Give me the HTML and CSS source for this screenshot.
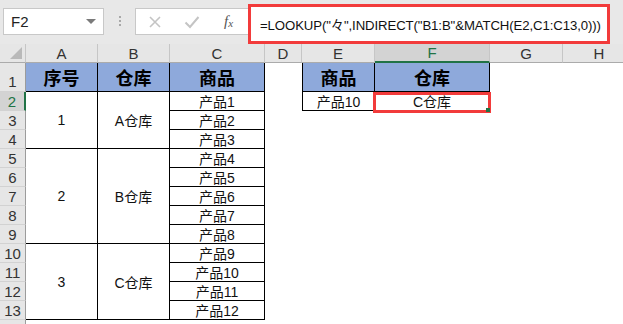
FILE: index.html
```html
<!DOCTYPE html>
<html>
<head>
<meta charset="utf-8">
<link rel="stylesheet" href="styles.css">
</head>
<body>
<div class="app">
  <div class="toolbar">
    <div class="namebox"><span class="name">F2</span><span class="caret"></span></div>
    <div class="sep"><i></i><i></i><i></i></div>
    <div class="btnbox">
      <svg class="ico" width="14" height="14" viewBox="0 0 14 14"><path d="M2 2L12 12M12 2L2 12" stroke="#c4c4c4" stroke-width="1.6" fill="none"/></svg>
      <svg class="ico" width="16" height="14" viewBox="0 0 16 14"><path d="M1.5 7.5L6 12L14.5 2" stroke="#c4c4c4" stroke-width="2" fill="none"/></svg>
      <span class="fx">f<sub>x</sub></span>
    </div>
    <div class="formula">=LOOKUP("々",INDIRECT("B1:B"&amp;MATCH(E2,C1:C13,0)))</div>
  </div>
  <div class="sheet">
    <div class="corner"></div>
    <div class="ch">A</div><div class="ch">B</div><div class="ch">C</div><div class="ch">D</div><div class="ch">E</div><div class="ch sel">F</div><div class="ch">G</div><div class="ch">H</div>

    <div class="rh tall">1</div>
    <div class="c hd">序号</div><div class="c hd">仓库</div><div class="c hd">商品</div><div class="c"></div><div class="c hd bl">商品</div><div class="c hd">仓库</div><div class="c"></div><div class="c"></div>

    <div class="rh sel">2</div>
    <div class="c b m3">1</div><div class="c b m3">A仓库</div><div class="c b">产品1</div><div class="c"></div><div class="c b bl">产品10</div><div class="c b act">C仓库<span class="mark"></span><span class="handle"></span></div><div class="c"></div><div class="c"></div>

    <div class="rh">3</div>
    <div class="c b">产品2</div><div class="c"></div><div class="c"></div><div class="c"></div><div class="c"></div><div class="c"></div>

    <div class="rh">4</div>
    <div class="c b">产品3</div><div class="c"></div><div class="c"></div><div class="c"></div><div class="c"></div><div class="c"></div>

    <div class="rh">5</div>
    <div class="c b m5">2</div><div class="c b m5">B仓库</div><div class="c b">产品4</div><div class="c"></div><div class="c"></div><div class="c"></div><div class="c"></div><div class="c"></div>

    <div class="rh">6</div>
    <div class="c b">产品5</div><div class="c"></div><div class="c"></div><div class="c"></div><div class="c"></div><div class="c"></div>

    <div class="rh">7</div>
    <div class="c b">产品6</div><div class="c"></div><div class="c"></div><div class="c"></div><div class="c"></div><div class="c"></div>

    <div class="rh">8</div>
    <div class="c b">产品7</div><div class="c"></div><div class="c"></div><div class="c"></div><div class="c"></div><div class="c"></div>

    <div class="rh">9</div>
    <div class="c b">产品8</div><div class="c"></div><div class="c"></div><div class="c"></div><div class="c"></div><div class="c"></div>

    <div class="rh">10</div>
    <div class="c b m4">3</div><div class="c b m4">C仓库</div><div class="c b">产品9</div><div class="c"></div><div class="c"></div><div class="c"></div><div class="c"></div><div class="c"></div>

    <div class="rh">11</div>
    <div class="c b">产品10</div><div class="c"></div><div class="c"></div><div class="c"></div><div class="c"></div><div class="c"></div>

    <div class="rh">12</div>
    <div class="c b">产品11</div><div class="c"></div><div class="c"></div><div class="c"></div><div class="c"></div><div class="c"></div>

    <div class="rh">13</div>
    <div class="c b">产品12</div><div class="c"></div><div class="c"></div><div class="c"></div><div class="c"></div><div class="c"></div>

    <div class="rh"></div>
  </div>
</div>
</body>
</html>
```
FILE: styles.css
```css
* { box-sizing: border-box; }
html, body { margin: 0; padding: 0; }
body {
  width: 623px;
  height: 324px;
  overflow: hidden;
  background: #fff;
  font-family: "Liberation Sans", "Noto Sans CJK SC", sans-serif;
}
.app { width: 623px; height: 324px; overflow: hidden; }

.toolbar {
  height: 44px;
  background: #e8e8e8;
  display: flex;
  align-items: flex-start;
  padding-left: 3px;
}
.namebox {
  margin-top: 8px;
  width: 101px;
  height: 27px;
  background: #fff;
  border: 1px solid #c8c8c8;
  display: flex;
  align-items: center;
  justify-content: space-between;
  padding: 0 7px 0 7px;
}
.name { font-size: 15px; color: #222; }
.caret {
  width: 0; height: 0;
  border-left: 5px solid transparent;
  border-right: 5px solid transparent;
  border-top: 5px solid #7a7a7a;
}
.sep {
  width: 31px;
  margin-top: 16px;
  display: flex;
  flex-direction: column;
  align-items: center;
  gap: 2px;
}
.sep i { display: block; width: 2px; height: 2px; background: #a8a8a8; }
.btnbox {
  margin-top: 8px;
  width: 113px;
  height: 27px;
  background: #fff;
  border: 1px solid #c8c8c8;
  border-right: none;
  display: flex;
  align-items: center;
  padding-left: 12px;
  gap: 22px;
}
.fx {
  font-family: "Liberation Serif", serif;
  font-style: italic;
  font-size: 15px;
  color: #555;
  margin-left: 2px;
}
.fx sub { font-size: 11px; vertical-align: -1px; }
.formula {
  margin-top: 4px;
  width: 362px;
  height: 40px;
  background: #fff;
  border: 3px solid #f23b3b;
  font-size: 13.2px;
  color: #111;
  display: flex;
  align-items: center;
  padding-left: 9px;
  white-space: nowrap;
  letter-spacing: -0.1px;
}

.sheet {
  display: grid;
  grid-template-columns: 26px 72px 72px 95px 37px 73px 115px 73px 73px;
  grid-template-rows: 19px 29px repeat(13, 19px);
}
.corner {
  background: #e6e6e6;
  border-right: 1px solid #c6c6c6;
  border-bottom: 1px solid #ababab;
  position: relative;
}
.corner::after {
  content: "";
  position: absolute;
  right: 3px;
  bottom: 3px;
  width: 0; height: 0;
  border-left: 12px solid transparent;
  border-bottom: 12px solid #b9b9b9;
}
.ch {
  background: #e6e6e6;
  border-right: 1px solid #c6c6c6;
  border-bottom: 1px solid #ababab;
  font-size: 15px;
  color: #333;
  display: flex;
  align-items: center;
  justify-content: center;
}
.ch.sel {
  background: #d3d3d3;
  color: #217346;
  border-bottom: 2px solid #217346;
}
.rh {
  background: #e6e6e6;
  border-right: 1px solid #9c9c9c;
  border-bottom: 1px solid #d2d2d2;
  font-size: 15px;
  color: #333;
  display: flex;
  align-items: flex-end;
  justify-content: center;
}
.rh.tall { padding-bottom: 1px; }
.rh.sel {
  background: #d3d3d3;
  color: #217346;
  border-right: 2px solid #217346;
}
.c {
  background: #fff;
  display: flex;
  align-items: center;
  justify-content: center;
  font-size: 14px;
  color: #111;
  white-space: nowrap;
}
.c.hd {
  background: #8ea9db;
  font-family: "Noto Sans CJK SC", sans-serif;
  font-weight: 700;
  font-size: 18px;
  color: #000;
  border-right: 1px solid #000;
  border-bottom: 1px solid #000;
}
.c.b {
  border-right: 1px solid #000;
  border-bottom: 1px solid #000;
}
.c.bl { border-left: 1px solid #000; }
.m3 { grid-row: span 3; }
.m4 { grid-row: span 4; }
.m5 { grid-row: span 5; }
.act { position: relative; }
.mark {
  position: absolute;
  left: -2px;
  right: -2px;
  top: 0;
  bottom: -3px;
  border: 3px solid #f23b3b;
  z-index: 2;
}
.handle {
  position: absolute;
  right: -1px;
  bottom: -2px;
  width: 4px;
  height: 4px;
  background: #217346;
  z-index: 3;
}
```
